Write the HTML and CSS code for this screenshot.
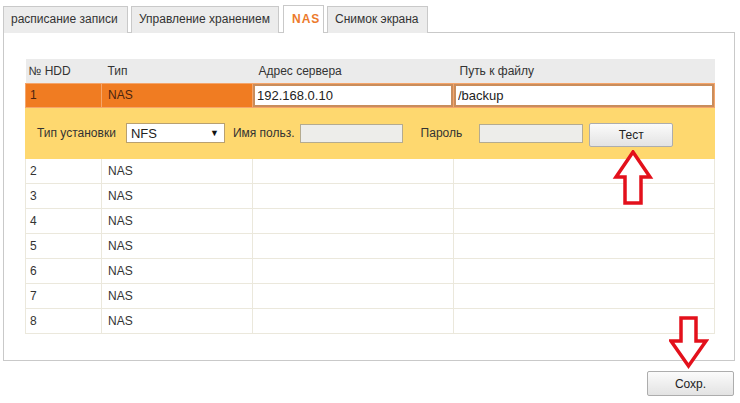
FILE: index.html
```html
<!DOCTYPE html>
<html lang="ru">
<head>
    <meta charset="UTF-8">
    <title>NAS</title>
    <link rel="stylesheet" href="styles.css">
</head>
<body>
    <div class="page">
        <!-- Tabs -->
        <ul class="tabs">
            <li class="tab">расписание записи</li>
            <li class="tab">Управление хранением</li>
            <li class="tab active">NAS</li>
            <li class="tab">Снимок экрана</li>
        </ul>

        <!-- NAS panel -->
        <div class="panel">
            <table class="nas-table">
                <colgroup>
                    <col class="c-num">
                    <col class="c-type">
                    <col class="c-addr">
                    <col class="c-path">
                </colgroup>
                <thead>
                    <tr>
                        <th>№ HDD</th>
                        <th>Тип</th>
                        <th>Адрес сервера</th>
                        <th>Путь к файлу</th>
                    </tr>
                </thead>
                <tbody>
                    <tr class="selected">
                        <td>1</td>
                        <td>NAS</td>
                        <td class="field"><input class="cell-input" type="text" value="192.168.0.10"></td>
                        <td class="field"><input class="cell-input" type="text" value="/backup"></td>
                    </tr>
                    <tr class="config">
                        <td colspan="4">
                            <div class="config-row">
                                <span class="lbl lbl-type">Тип установки</span>
                                <div class="select">NFS <span class="caret">▼</span></div>
                                <span class="lbl lbl-user">Имя польз.</span>
                                <input class="box box-user" type="text" disabled>
                                <span class="lbl lbl-pass">Пароль</span>
                                <input class="box box-pass" type="password" disabled>
                                <button class="btn btn-test">Тест</button>
                            </div>
                        </td>
                    </tr>
                    <tr><td>2</td><td>NAS</td><td></td><td></td></tr>
                    <tr><td>3</td><td>NAS</td><td></td><td></td></tr>
                    <tr><td>4</td><td>NAS</td><td></td><td></td></tr>
                    <tr><td>5</td><td>NAS</td><td></td><td></td></tr>
                    <tr><td>6</td><td>NAS</td><td></td><td></td></tr>
                    <tr><td>7</td><td>NAS</td><td></td><td></td></tr>
                    <tr><td>8</td><td>NAS</td><td></td><td></td></tr>
                </tbody>
            </table>
        </div>

        <div class="actions">
            <button class="btn btn-save">Сохр.</button>
        </div>

        <!-- Red hint arrows -->
        <svg class="arrow arrow-up" width="42" height="56" viewBox="0 0 42 56">
            <path d="M21 2 L38 27 L29 27 L29 53 L13 53 L13 27 L4 27 Z" fill="#fff" stroke="#e3101b" stroke-width="3.5" stroke-linejoin="miter"/>
        </svg>
        <svg class="arrow arrow-down" width="40" height="54" viewBox="0 0 40 54">
            <path d="M12 2 L27 2 L27 25 L37 25 L19.5 50 L2 25 L12 25 Z" fill="#fff" stroke="#e3101b" stroke-width="3.5" stroke-linejoin="miter"/>
        </svg>
    </div>
</body>
</html>
```

FILE: styles.css
```css
* {
    margin: 0;
    padding: 0;
    box-sizing: border-box;
}

body {
    font-family: "Liberation Sans", Arial, sans-serif;
    font-size: 12px;
    color: #333;
    background: #fff;
}

.page {
    position: relative;
    width: 740px;
    height: 403px;
    padding: 5px 0 0 3px;
}

/* Tabs */
.tabs {
    list-style: none;
    display: flex;
    align-items: flex-end;
    gap: 3px;
    height: 28px;
    position: relative;
    z-index: 1;
}

.tab {
    height: 27px;
    line-height: 25px;
    padding: 0 7px;
    background: #ececec;
    border: 1px solid #c9c9c9;
    border-bottom: none;
    color: #333;
    font-size: 12px;
}

.tab:nth-child(1) { width: 125px; }
.tab:nth-child(2) { width: 148px; }
.tab:nth-child(3) { margin-left: 1px; }
.tab:nth-child(4) { width: 101px; }

.tab.active {
    height: 28px;
    width: 41px;
    background: #fff;
    color: #ec7a2c;
    font-weight: bold;
    letter-spacing: 1px;
    padding: 1px 0 0 8px;
}

/* Panel */
.panel {
    width: 732px;
    height: 329px;
    margin-top: -1px;
    border: 1px solid #c9c9c9;
    padding: 26px 0 0 21px;
}

.nas-table {
    width: 689px;
    border-collapse: collapse;
    table-layout: fixed;
}

.c-num { width: 76px; }
.c-type { width: 151px; }
.c-addr { width: 201px; }
.c-path { width: 261px; }

.nas-table th {
    height: 24px;
    background: #ebebeb;
    font-weight: normal;
    text-align: left;
    padding: 0 6px;
    color: #333;
}

.nas-table th:first-child {
    padding-left: 3px;
}

.nas-table td {
    height: 25px;
    padding: 0 6px;
    border: 1px solid #ebe8dc;
}

.nas-table td:first-child {
    padding-left: 4px;
}

.nas-table tr.selected td {
    height: 24px;
    background: #f07c22;
    border-color: #f5a56a;
    color: #4a2410;
}

.nas-table tr.selected td.field {
    padding: 0;
    background: #f07c22;
}

.cell-input {
    display: block;
    width: 100%;
    height: 23px;
    border: 2px solid #c98d5c;
    background: #fff;
    font-family: "Liberation Sans", Arial, sans-serif;
    font-size: 13px;
    color: #222;
    padding: 0 2px;
    outline: none;
}

.nas-table tr.config td {
    height: 51px;
    padding: 0;
    background: #fed86f;
    border-color: #fed86f;
}

.config-row {
    display: flex;
    align-items: center;
    padding: 1px 0 0 11px;
}

.lbl {
    color: #333;
}

.select {
    display: flex;
    align-items: center;
    justify-content: space-between;
    width: 99px;
    height: 20px;
    margin-left: 10px;
    padding: 0 5px 0 4px;
    background: #fff;
    border: 1px solid #b8a070;
    font-size: 13px;
    color: #222;
}

.caret {
    font-size: 9px;
    color: #111;
}

.lbl-user {
    margin-left: 8px;
}

.box {
    height: 19px;
    background: #ededea;
    border: 1px solid #b4ab90;
}

.box-user {
    width: 103px;
    margin-left: 5px;
}

.lbl-pass {
    margin-left: 18px;
}

.box-pass {
    width: 104px;
    margin-left: 17px;
}

.btn {
    font-family: "Liberation Sans", Arial, sans-serif;
    font-size: 12px;
    color: #222;
    background: linear-gradient(#fbfbfb, #e3e3e3);
    border: 1px solid #adadad;
    border-radius: 2px;
    cursor: pointer;
}

.btn-test {
    width: 84px;
    height: 24px;
    margin-left: 6px;
    margin-top: 3px;
}

.actions {
    display: flex;
    justify-content: flex-end;
    padding: 10px 6px 0 0;
}

.btn-save {
    width: 87px;
    height: 25px;
}

/* Hint arrows */
.arrow {
    position: absolute;
}

.arrow-up {
    left: 612px;
    top: 150px;
}

.arrow-down {
    left: 669px;
    top: 316px;
}
```
